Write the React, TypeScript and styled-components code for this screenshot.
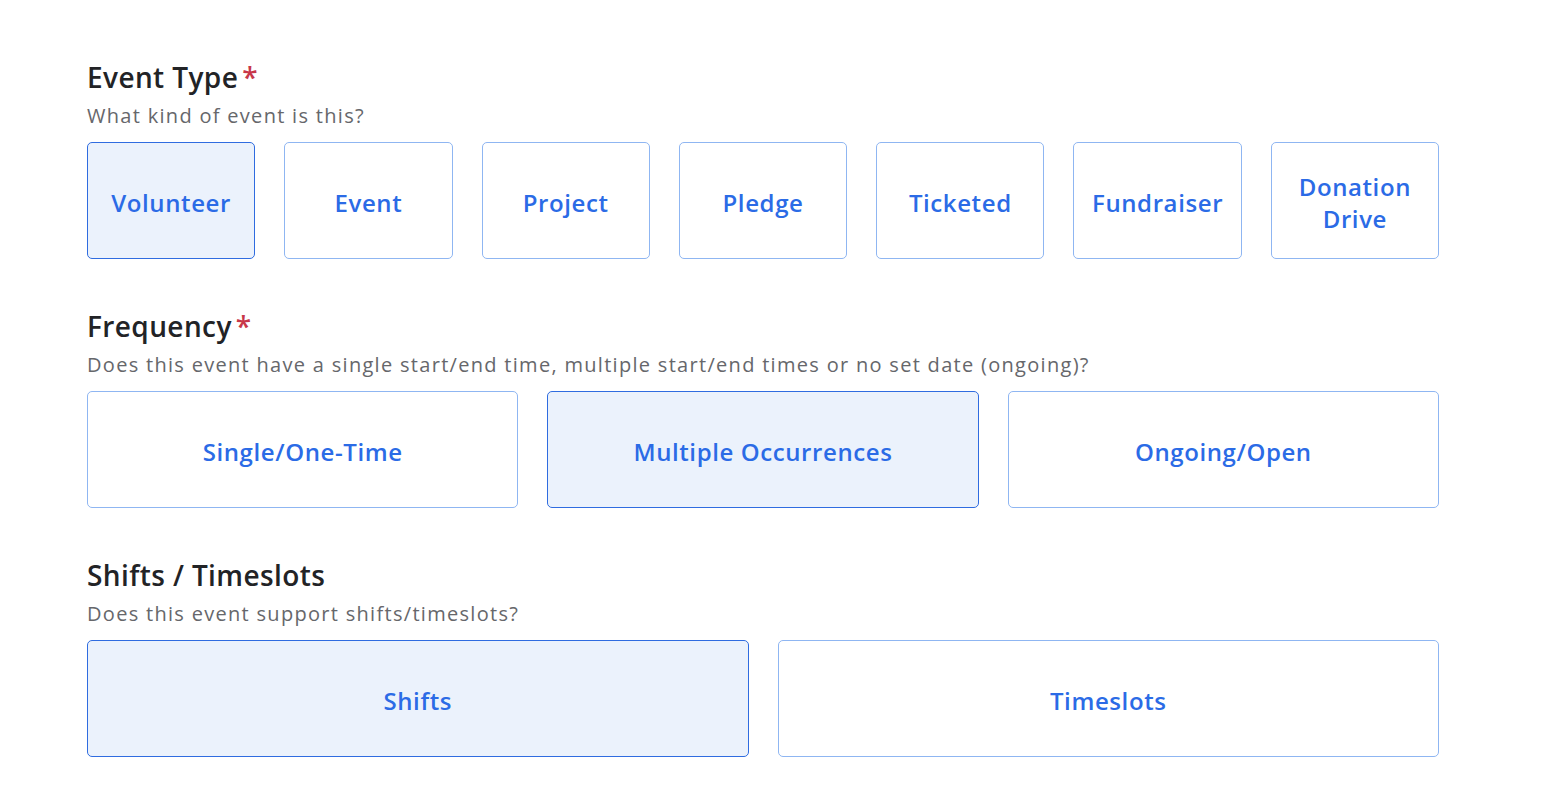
import React, { useState } from "react";
import styled, { createGlobalStyle } from "styled-components";

const GlobalStyle = createGlobalStyle`
  html, body {
    margin: 0;
    padding: 0;
    background: #ffffff;
  }
  body {
    font-family: "Open Sans", "Noto Sans", "Liberation Sans", sans-serif;
    -webkit-font-smoothing: antialiased;
  }
`;

const Page = styled.div`
  width: 1352px;
  padding: 60px 0 40px 87px;
  display: flex;
  flex-direction: column;
  gap: 50px;
`;

const Section = styled.section`
  display: flex;
  flex-direction: column;
`;

const Title = styled.h2`
  margin: 0;
  font-size: 28px;
  line-height: 34px;
  font-weight: 600;
  color: #222326;
  letter-spacing: 0.4px;
`;

const Required = styled.span`
  color: #c8374a;
  margin-left: 4px;
`;

const Hint = styled.p`
  margin: 8px 0 12px;
  font-size: 20px;
  line-height: 28px;
  color: #66676b;
  letter-spacing: 1.3px;
`;

const Options = styled.div<{ $cols: number }>`
  display: grid;
  grid-template-columns: repeat(${(p) => p.$cols}, 1fr);
  column-gap: 29px;
`;

const Option = styled.button<{ $selected: boolean }>`
  height: 117px;
  box-sizing: border-box;
  border-radius: 5px;
  border: 1px solid ${(p) => (p.$selected ? "#2f6ce0" : "#8fb6f2")};
  background: ${(p) => (p.$selected ? "#ebf2fc" : "#ffffff")};
  color: #2b6be6;
  font-family: inherit;
  font-size: 24px;
  line-height: 32px;
  font-weight: 600;
  letter-spacing: 0.6px;
  padding: 4px 16px 0;
  cursor: pointer;
  display: flex;
  align-items: center;
  justify-content: center;
  text-align: center;
`;

type Group = {
  title: string;
  hint: string;
  required: boolean;
  options: string[];
  initial: string;
};

const groups: Group[] = [
  {
    title: "Event Type",
    hint: "What kind of event is this?",
    required: true,
    options: ["Volunteer", "Event", "Project", "Pledge", "Ticketed", "Fundraiser", "Donation Drive"],
    initial: "Volunteer",
  },
  {
    title: "Frequency",
    hint: "Does this event have a single start/end time, multiple start/end times or no set date (ongoing)?",
    required: true,
    options: ["Single/One-Time", "Multiple Occurrences", "Ongoing/Open"],
    initial: "Multiple Occurrences",
  },
  {
    title: "Shifts / Timeslots",
    hint: "Does this event support shifts/timeslots?",
    required: false,
    options: ["Shifts", "Timeslots"],
    initial: "Shifts",
  },
];

function ChoiceGroup({ group }: { group: Group }) {
  const [value, setValue] = useState(group.initial);
  return (
    <Section>
      <Title>
        {group.title}
        {group.required && <Required>*</Required>}
      </Title>
      <Hint>{group.hint}</Hint>
      <Options $cols={group.options.length}>
        {group.options.map((opt) => (
          <Option key={opt} type="button" $selected={opt === value} onClick={() => setValue(opt)}>
            {opt}
          </Option>
        ))}
      </Options>
    </Section>
  );
}

export default function App() {
  return (
    <>
      <GlobalStyle />
      <Page>
        {groups.map((g) => (
          <ChoiceGroup key={g.title} group={g} />
        ))}
      </Page>
    </>
  );
}
